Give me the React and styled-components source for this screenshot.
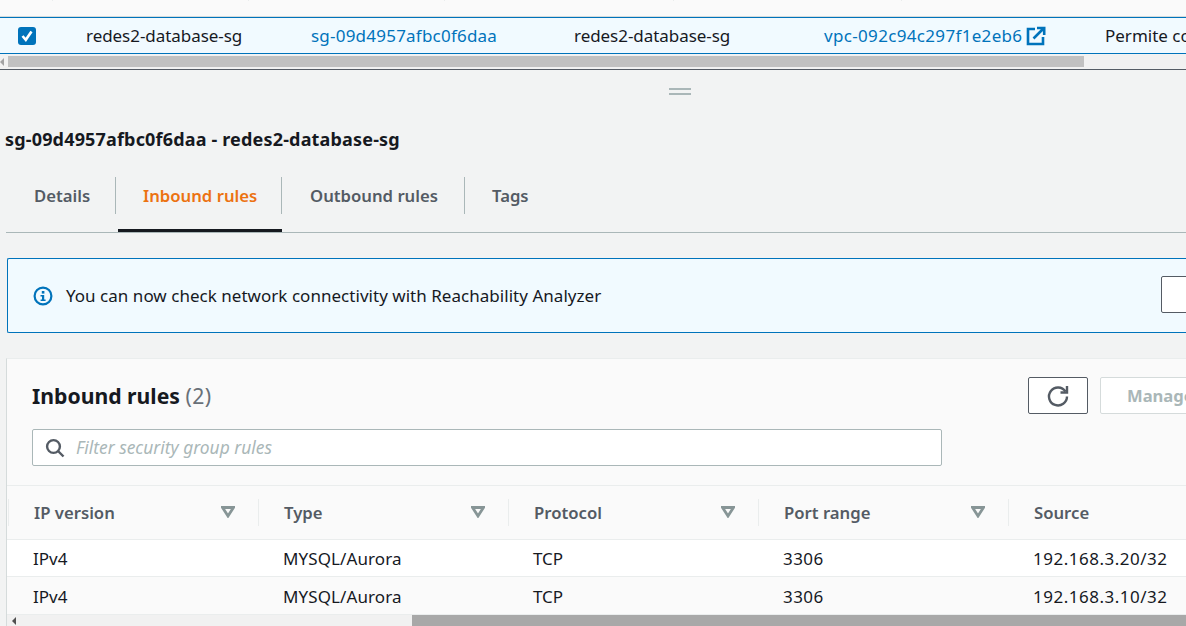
import React from 'react'
import styled, { createGlobalStyle } from 'styled-components'

const Global = createGlobalStyle`
	html, body {
		margin: 0;
		padding: 0;
		background: #f2f3f3;
	}
	body {
		width: 1186px;
		height: 626px;
		overflow: hidden;
		font-family: "Noto Sans", "Open Sans", sans-serif;
		font-size: 17px;
		color: #16191f;
	}
`

const Page = styled.div`
	width: 1186px;
	height: 626px;
	overflow: hidden;
	display: flex;
	flex-direction: column;
`

const TopTable = styled.div`
	flex: none;
	height: 70px;
	background: #f2f3f3;
	border-bottom: 1px solid #545b64;
	box-sizing: border-box;
`

const TopHead = styled.div`
	height: 17px;
	background: #fafafa;
	border-bottom: 1px solid #d5dbdb;
	box-sizing: border-box;
	display: grid;
	grid-template-columns: 53px 196px 196px 229px 228px;
`

const HeadTick = styled.div`
	height: 1px;
	border-right: 1px solid #eaeded;
`

const SelectedRow = styled.div`
	height: 37px;
	box-sizing: border-box;
	display: flex;
	align-items: center;
	background: #f1faff;
	border-top: 1px solid #0073bb;
	border-bottom: 1px solid #0073bb;
	white-space: nowrap;
	overflow: hidden;
`

const Check = styled.div`
	flex: none;
	width: 18px;
	height: 18px;
	margin-left: 18px;
	background: #0073bb;
	border-radius: 3px;
	display: flex;
	align-items: center;
	justify-content: center;
`

const RowCell = styled.div`
	flex: none;
	width: ${p => p.$w}px;
	margin-left: ${p => p.$ml || 0}px;
	letter-spacing: ${p => p.$ls || 0}px;
	color: ${p => (p.$link ? '#0073bb' : '#16191f')};
	display: flex;
	align-items: center;
	gap: 4px;
`

const ScrollTrack = styled.div`
	height: 13px;
	margin-top: 1px;
	background: #f1f1f1;
	display: flex;
	align-items: center;
	gap: 3px;
`

const ArrowLeft = styled.div`
	flex: none;
	width: 0;
	height: 0;
	margin-left: ${p => p.$ml || 0}px;
	border-top: 4px solid transparent;
	border-bottom: 4px solid transparent;
	border-right: 4px solid ${p => p.$color || '#a3a3a3'};
`

const ScrollThumb = styled.div`
	flex: none;
	height: 11px;
	width: ${p => p.$w}px;
	margin-left: ${p => p.$ml || 0}px;
	background: ${p => p.$color};
`

const Splitter = styled.div`
	flex: none;
	height: 44px;
	display: flex;
	flex-direction: column;
	align-items: center;
	justify-content: flex-start;
	gap: 3px;
	padding: 18px 0 0 173px;
	box-sizing: border-box;
`

const SplitLine = styled.div`
	width: 22px;
	height: 2px;
	background: #aab7b8;
`

const Content = styled.div`
	flex: 1;
	min-height: 0;
	padding-left: 6px;
	display: flex;
	flex-direction: column;
`

const Title = styled.h2`
	margin: 13px 0 1px -1px;
	font-size: 18px;
	letter-spacing: 0.17px;
	line-height: 24px;
	font-weight: 700;
	height: 24px;
	white-space: nowrap;
`

const Tabs = styled.div`
	margin-top: 25px;
	height: 56px;
	box-sizing: border-box;
	border-bottom: 1px solid #aab7b8;
	display: flex;
`

const Tab = styled.div`
	position: relative;
	flex: none;
	box-sizing: border-box;
	width: ${p => p.$w}px;
	height: 55px;
	padding: 9px 0 0 ${p => p.$pl}px;
	font-size: 16.7px;
	line-height: 20px;
	font-weight: 600;
	color: ${p => (p.$active ? '#ec7211' : '#545b64')};

	${p =>
		p.$divider &&
		`
		&::after {
			content: '';
			position: absolute;
			top: 0;
			right: 0;
			width: 1px;
			height: 37px;
			background: #aab7b8;
		}
	`}

	${p =>
		p.$active &&
		`
		&::before {
			content: '';
			position: absolute;
			left: 2px;
			right: 0;
			bottom: 0;
			height: 3px;
			background: #16191f;
		}
	`}
`

const Flash = styled.div`
	margin: 25px 0 0 1px;
	height: 75px;
	box-sizing: border-box;
	background: #f1faff;
	border: 1px solid #0073bb;
	border-radius: 2px 0 0 2px;
	border-right: none;
	display: flex;
	align-items: center;
	padding-left: 25px;
	position: relative;
`

const FlashText = styled.span`
	margin-left: 13px;
	font-size: 17px;
	letter-spacing: 0.03px;
	white-space: nowrap;
`

const FlashButton = styled.div`
	position: absolute;
	left: 1153px;
	top: 17px;
	width: 60px;
	height: 37px;
	box-sizing: border-box;
	background: #fff;
	border: 1px solid #545b64;
	border-radius: 2px;
`

const Panel = styled.div`
	margin: 25px 0 0 0;
	flex: 1;
	min-height: 0;
	background: #fafafa;
	border-left: 1px solid #d5dbdb;
	border-top: 1px solid #eaeded;
	display: flex;
	flex-direction: column;
`

const PanelHead = styled.div`
	position: relative;
	height: 127px;
	box-sizing: border-box;
	padding: 20px 0 0 25px;
	border-bottom: 1px solid #eaeded;
`

const PanelTitle = styled.div`
	font-size: 21.2px;
	line-height: 34px;
	font-weight: 700;
	white-space: nowrap;
`

const Count = styled.span`
	font-weight: 400;
	letter-spacing: 0.4px;
	color: #687078;
`

const Actions = styled.div`
	position: absolute;
	left: 1021px;
	top: 18px;
	display: flex;
	gap: 12px;
`

const RefreshButton = styled.div`
	width: 60px;
	height: 37px;
	box-sizing: border-box;
	background: #fff;
	border: 1px solid #545b64;
	border-radius: 2px;
	display: flex;
	align-items: center;
	justify-content: center;
`

const ManageButton = styled.div`
	width: 160px;
	height: 37px;
	box-sizing: border-box;
	background: #fff;
	border: 1px solid #d5dbdb;
	border-radius: 2px;
	padding-left: 26px;
	font-size: 16.6px;
	line-height: 35px;
	font-weight: 700;
	color: #aab7b8;
	white-space: nowrap;
`

const Filter = styled.div`
	margin-top: 16px;
	width: 910px;
	height: 37px;
	box-sizing: border-box;
	background: #fff;
	border: 1px solid #aab7b8;
	border-radius: 2px;
	display: flex;
	align-items: center;
	padding-left: 12px;
`

const FilterText = styled.span`
	margin: -1px 0 0 11px;
	font-size: 17.4px;
	font-style: italic;
	color: #aab7b8;
`

const HeaderRow = styled.div`
	height: 54px;
	box-sizing: border-box;
	display: flex;
	padding-left: 1px;
	border-bottom: 1px solid #eaeded;
`

const HeaderCell = styled.div`
	position: relative;
	flex: none;
	width: 250px;
	box-sizing: border-box;
	padding: 15px 0 0 26px;
	font-size: 16.7px;
	line-height: 24px;
	font-weight: 600;
	color: #545b64;

	&::before {
		content: '';
		position: absolute;
		left: 0;
		top: 13px;
		width: 1px;
		height: 27px;
		background: #eaeded;
	}
`

const SortIcon = styled.svg`
	position: absolute;
	right: 23px;
	top: 20px;
`

const BodyRow = styled.div`
	height: ${p => p.$h}px;
	box-sizing: border-box;
	display: flex;
	align-items: center;
	background: ${p => p.$bg};
	border-bottom: 1px solid #eaeded;
`

const BodyCell = styled.div`
	flex: none;
	width: 250px;
	box-sizing: border-box;
	padding: 1px 0 0 26px;
	font-size: 17px;
	letter-spacing: ${p => p.$ls || 0}px;
	white-space: nowrap;
`

const BottomScroll = styled.div`
	flex: none;
	height: 11px;
	background: #f1f1f1;
	display: flex;
	align-items: center;
`

const columns = ['IP version', 'Type', 'Protocol', 'Port range', 'Source']

const rows = [
	['IPv4', 'MYSQL/Aurora', 'TCP', '3306', '192.168.3.20/32'],
	['IPv4', 'MYSQL/Aurora', 'TCP', '3306', '192.168.3.10/32']
]

// digit heavy cells come out a bit wider in the shot
const spacing = [0, 0.1, 0, 0.45, 0.5]

const App = () => (
	<Page>
		<Global />
		<TopTable>
			<TopHead>
				<HeadTick />
				<HeadTick />
				<HeadTick />
				<HeadTick />
				<HeadTick />
			</TopHead>
			<SelectedRow>
				<Check>
					<svg width='14' height='14' viewBox='0 0 14 14'>
						<path d='M2.5 7 L5.8 10.8 L11.5 2.5' fill='none' stroke='#fff' strokeWidth='2.6' />
					</svg>
				</Check>
				<RowCell $w={207} $ml={50} $ls={-0.05}>redes2-database-sg</RowCell>
				<RowCell $w={263} $ml={18} $link='1' $ls={0.22}>sg-09d4957afbc0f6daa</RowCell>
				<RowCell $w={250} $ls={-0.05}>redes2-database-sg</RowCell>
				<RowCell $w={281} $link='1' $ls={0.33}>
					vpc-092c94c297f1e2eb6
					<svg width='20' height='20' viewBox='0 0 20 20'>
						<path d='M9 3 H2 V18 H17 V11' fill='none' stroke='#0073bb' strokeWidth='2.6' />
						<path d='M7.5 12.5 L17 3 M11 2 H18.2 V9' fill='none' stroke='#0073bb' strokeWidth='2.6' />
					</svg>
				</RowCell>
				<RowCell $w={120}>Permite conexões</RowCell>
			</SelectedRow>
			<ScrollTrack>
				<ArrowLeft />
				<ScrollThumb $w={1076} $ml={1} $color='#c1c1c1' />
			</ScrollTrack>
		</TopTable>
		<Splitter>
			<SplitLine />
			<SplitLine />
		</Splitter>
		<Content>
			<Title>sg-09d4957afbc0f6daa - redes2-database-sg</Title>
			<Tabs>
				<Tab $w={110} $pl={28} $divider='1'>Details</Tab>
				<Tab $w={166} $pl={27} $active='1' $divider='1'>Inbound rules</Tab>
				<Tab $w={183} $pl={28} $divider='1'>Outbound rules</Tab>
				<Tab $w={90} $pl={27}>Tags</Tab>
			</Tabs>
			<Flash>
				<svg width='20' height='20' viewBox='0 0 20 20'>
					<circle cx='10' cy='10' r='8.4' fill='none' stroke='#0073bb' strokeWidth='2.2' />
					<rect x='8.8' y='5' width='2.6' height='2.6' fill='#0073bb' />
					<path d='M7.5 9 H11.2 V13.5 H12.6 V15 H7.6 V13.5 H9 V10.4 H7.5 Z' fill='#0073bb' />
				</svg>
				<FlashText>You can now check network connectivity with Reachability Analyzer</FlashText>
				<FlashButton />
			</Flash>
			<Panel>
				<PanelHead>
					<PanelTitle>Inbound rules <Count>(2)</Count></PanelTitle>
					<Actions>
						<RefreshButton>
							<svg width='24' height='24' viewBox='0 0 24 24'>
								<path d='M19.5 7.5 A9 9 0 1 0 21 12.5' fill='none' stroke='#545b64' strokeWidth='2.4' />
								<path d='M21 2 V8.5 H14.5' fill='none' stroke='#545b64' strokeWidth='2.4' />
							</svg>
						</RefreshButton>
						<ManageButton>Manage rules</ManageButton>
					</Actions>
					<Filter>
						<svg width='20' height='20' viewBox='0 0 20 20'>
							<circle cx='8.5' cy='8.5' r='6.4' fill='none' stroke='#545b64' strokeWidth='2.4' />
							<path d='M13 13 L18.5 18.5' stroke='#545b64' strokeWidth='2.4' />
						</svg>
						<FilterText>Filter security group rules</FilterText>
					</Filter>
				</PanelHead>
				<HeaderRow>
					{columns.map(col => (
						<HeaderCell key={col}>
							{col}
							{col !== 'Source' && (
								<SortIcon width='14' height='12' viewBox='0 0 14 12'>
									<path d='M1.5 1.5 H12.5 L7 10 Z' fill='none' stroke='#879596' strokeWidth='2.8' />
								</SortIcon>
							)}
						</HeaderCell>
					))}
				</HeaderRow>
				{rows.map((row, i) => (
					<BodyRow key={i} $h={i === 0 ? 37 : 38} $bg={i === 0 ? '#fff' : '#fafafa'}>
						{row.map((cell, j) => (
							<BodyCell key={j} $ls={spacing[j]}>{cell}</BodyCell>
						))}
					</BodyRow>
				))}
				<BottomScroll>
					<ArrowLeft $ml={5} $color='#505050' />
					<ScrollThumb $w={774} $ml={396} $color='#a8a8a8' />
				</BottomScroll>
			</Panel>
		</Content>
	</Page>
)

export default App
